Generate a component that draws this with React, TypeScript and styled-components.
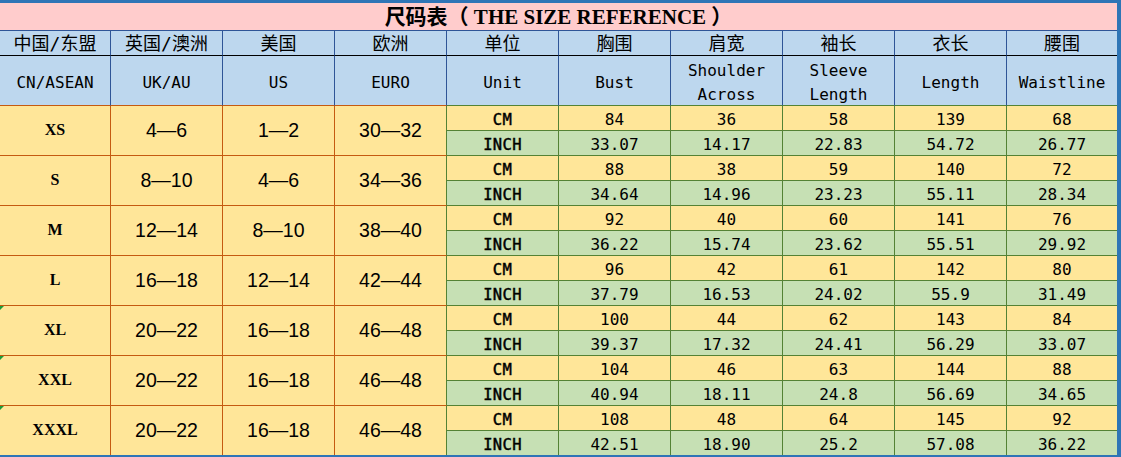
import React from "react";
import styled, { createGlobalStyle, css } from "styled-components";

const GlobalStyle = createGlobalStyle`
  html, body { margin: 0; padding: 0; background: #ffffff; }
  * { box-sizing: border-box; }
`;

const BLUE_OUTER = "#2E75B6";
const HEAD_LINE = "#2F5597";
const ORANGE = "#C55A11";
const GREEN = "#548235";
const PINK = "#FFCCCC";
const HEAD_BG = "#BDD7EE";
const YELLOW = "#FFE699";
const GREEN_BG = "#C6E0B4";

const MONO = `"DejaVu Sans Mono", "Noto Sans CJK SC", monospace`;

const Sheet = styled.div`
  width: 1121px;
  display: grid;
  grid-template-columns: 111px repeat(8, 112px) 110px;
  border-top: 3px solid ${BLUE_OUTER};
  border-right: 4px solid ${BLUE_OUTER};
  border-bottom: 2px solid ${BLUE_OUTER};
  color: #000;
`;

const Title = styled.div`
  grid-column: 1 / -1;
  height: 28px;
  background: ${PINK};
  border-bottom: 1px solid ${HEAD_LINE};
  display: flex;
  align-items: center;
  justify-content: center;
  font-family: "Liberation Serif", "Noto Sans CJK SC", serif;
  font-weight: 700;
  font-size: 21px;
  padding-bottom: 3px;
  white-space: pre;
`;

const HeadCell = styled.div<{ $last?: boolean; $tall?: boolean; $under?: string }>`
  background: ${HEAD_BG};
  display: flex;
  flex-direction: column;
  align-items: center;
  justify-content: center;
  text-align: center;
  font-family: ${MONO};
  border-right: ${(p) => (p.$last ? "none" : `1px solid ${HEAD_LINE}`)};
  ${(p) =>
    p.$tall
      ? css`
          height: 50px;
          font-size: 16px;
          line-height: 24px;
          border-bottom: 1px solid ${p.$under};
          padding-top: 4px;
        `
      : css`
          height: 25px;
          font-size: 18px;
          line-height: 24px;
          border-bottom: 1px solid #000;
          padding-top: 2px;
        `}
`;

const SizeCell = styled.div<{ $edge: string; $bottom: boolean }>`
  position: relative;
  grid-row: span 2;
  height: ${(p) => (p.$bottom ? "49px" : "50px")};
  background: ${YELLOW};
  border-right: 1px solid ${(p) => p.$edge};
  border-bottom: ${(p) => (p.$bottom ? "none" : `1px solid ${ORANGE}`)};
  display: flex;
  align-items: center;
  justify-content: center;
  padding-bottom: 2px;
`;

const SizeLabel = styled.span`
  font-family: "Liberation Serif", serif;
  font-weight: 700;
  font-size: 16px;
`;

const RangeLabel = styled.span`
  font-family: "Liberation Sans", sans-serif;
  font-size: 19.5px;
  padding-top: 1px;
`;

const Flag = styled.span`
  position: absolute;
  left: 0;
  top: 0;
  width: 0;
  height: 0;
  border-top: 4px solid #1f9a3a;
  border-right: 4px solid transparent;
`;

const ValueCell = styled.div<{ $inch: boolean; $last: boolean; $bottom: boolean; $unit?: boolean }>`
  height: ${(p) => (p.$bottom ? "24px" : "25px")};
  background: ${(p) => (p.$inch ? GREEN_BG : YELLOW)};
  border-right: ${(p) => (p.$last ? "none" : `1px solid ${GREEN}`)};
  border-bottom: ${(p) => (p.$bottom ? "none" : `1px solid ${GREEN}`)};
  display: flex;
  align-items: center;
  justify-content: center;
  font-family: ${MONO};
  font-size: 16px;
  line-height: 24px;
  padding-top: 3px;
  ${(p) =>
    p.$unit &&
    css`
      font-size: 15.5px;
      -webkit-text-stroke: 0.45px #000;
      letter-spacing: 0.3px;
    `}
`;

type Row = {
  size: string;
  uk: string;
  us: string;
  eu: string;
  cm: string[];
  inch: string[];
  flag?: boolean;
};

const rows: Row[] = [
  { size: "XS", uk: "4—6", us: "1—2", eu: "30—32", cm: ["84", "36", "58", "139", "68"], inch: ["33.07", "14.17", "22.83", "54.72", "26.77"] },
  { size: "S", uk: "8—10", us: "4—6", eu: "34—36", cm: ["88", "38", "59", "140", "72"], inch: ["34.64", "14.96", "23.23", "55.11", "28.34"] },
  { size: "M", uk: "12—14", us: "8—10", eu: "38—40", cm: ["92", "40", "60", "141", "76"], inch: ["36.22", "15.74", "23.62", "55.51", "29.92"] },
  { size: "L", uk: "16—18", us: "12—14", eu: "42—44", cm: ["96", "42", "61", "142", "80"], inch: ["37.79", "16.53", "24.02", "55.9", "31.49"] },
  { size: "XL", uk: "20—22", us: "16—18", eu: "46—48", cm: ["100", "44", "62", "143", "84"], inch: ["39.37", "17.32", "24.41", "56.29", "33.07"], flag: true },
  { size: "XXL", uk: "20—22", us: "16—18", eu: "46—48", cm: ["104", "46", "63", "144", "88"], inch: ["40.94", "18.11", "24.8", "56.69", "34.65"], flag: true },
  { size: "XXXL", uk: "20—22", us: "16—18", eu: "46—48", cm: ["108", "48", "64", "145", "92"], inch: ["42.51", "18.90", "25.2", "57.08", "36.22"], flag: true },
];

const cnHeads = ["中国/东盟", "英国/澳洲", "美国", "欧洲", "单位", "胸围", "肩宽", "袖长", "衣长", "腰围"];
const enHeads: string[][] = [
  ["CN/ASEAN"],
  ["UK/AU"],
  ["US"],
  ["EURO"],
  ["Unit"],
  ["Bust"],
  ["Shoulder", "Across"],
  ["Sleeve", "Length"],
  ["Length"],
  ["Waistline"],
];

export default function App() {
  return (
    <>
      <GlobalStyle />
      <Sheet>
        <Title>尺码表（ THE SIZE REFERENCE ）</Title>
        {cnHeads.map((h, i) => (
          <HeadCell key={`cn${i}`} $last={i === 9}>
            {h}
          </HeadCell>
        ))}
        {enHeads.map((lines, i) => (
          <HeadCell key={`en${i}`} $tall $last={i === 9} $under={i < 4 ? ORANGE : GREEN}>
            {lines.map((l) => (
              <span key={l}>{l}</span>
            ))}
          </HeadCell>
        ))}
        {rows.map((r, ri) => {
          const bottom = ri === rows.length - 1;
          return (
            <React.Fragment key={r.size}>
              <SizeCell $edge={ORANGE} $bottom={bottom}>
                {r.flag && <Flag />}
                <SizeLabel>{r.size}</SizeLabel>
              </SizeCell>
              <SizeCell $edge={ORANGE} $bottom={bottom}>
                <RangeLabel>{r.uk}</RangeLabel>
              </SizeCell>
              <SizeCell $edge={ORANGE} $bottom={bottom}>
                <RangeLabel>{r.us}</RangeLabel>
              </SizeCell>
              <SizeCell $edge={GREEN} $bottom={bottom}>
                <RangeLabel>{r.eu}</RangeLabel>
              </SizeCell>
              <ValueCell $inch={false} $last={false} $bottom={false} $unit>
                CM
              </ValueCell>
              {r.cm.map((v, i) => (
                <ValueCell key={`c${i}`} $inch={false} $last={i === 4} $bottom={false}>
                  {v}
                </ValueCell>
              ))}
              <ValueCell $inch $last={false} $bottom={bottom} $unit>
                INCH
              </ValueCell>
              {r.inch.map((v, i) => (
                <ValueCell key={`i${i}`} $inch $last={i === 4} $bottom={bottom}>
                  {v}
                </ValueCell>
              ))}
            </React.Fragment>
          );
        })}
      </Sheet>
    </>
  );
}
